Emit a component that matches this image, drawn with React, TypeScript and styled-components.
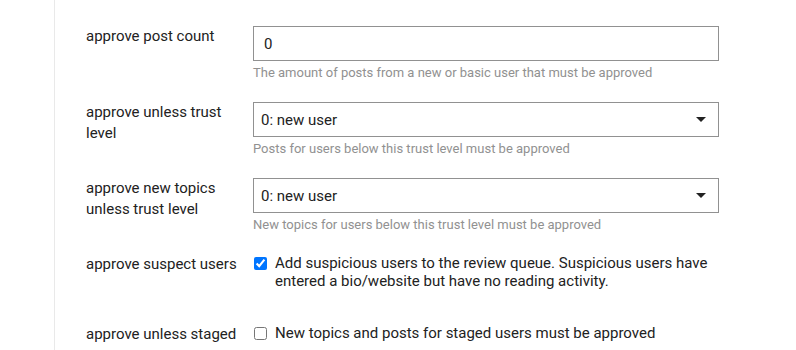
import React from 'react';
import styled, { createGlobalStyle } from 'styled-components';

const GlobalStyle = createGlobalStyle`
  body {
    margin: 0;
    background: #fff;
    font-family: Roboto, "Liberation Sans", sans-serif;
    color: #222;
  }
`;

const Page = styled.div`
  width: 796px;
  height: 350px;
  overflow: hidden;
  padding-left: 54px;
  box-sizing: border-box;
`;

const Panel = styled.div`
  border-left: 1px solid #e9e9e9;
  height: 100%;
  padding: 26px 0 0 31px;
  box-sizing: border-box;
`;

const SettingRow = styled.div<{ $gap: number }>`
  display: grid;
  grid-template-columns: 167px 466px;
  margin-bottom: ${({ $gap }) => $gap}px;
`;

const Label = styled.div`
  font-size: 15px;
  line-height: 21px;
  padding-right: 10px;
`;

const Value = styled.div`
  display: flex;
  flex-direction: column;
`;

const TextInput = styled.div`
  height: 35px;
  box-sizing: border-box;
  border: 1px solid #919191;
  padding: 0 10px;
  display: flex;
  align-items: center;
  font-size: 15px;
`;

const Select = styled.div`
  height: 35px;
  box-sizing: border-box;
  border: 1px solid #919191;
  padding: 0 12px 0 7px;
  display: flex;
  align-items: center;
  justify-content: space-between;
  font-size: 15px;
`;

const Caret = styled.span`
  width: 0;
  height: 0;
  border-left: 5px solid transparent;
  border-right: 5px solid transparent;
  border-top: 5px solid #222;
`;

const Description = styled.div`
  font-size: 13px;
  line-height: 18px;
  color: #919191;
  margin-top: 3px;
`;

const CheckLabel = styled.label`
  display: flex;
  align-items: flex-start;
  font-size: 15px;
  line-height: 18px;
`;

const Box = styled.input`
  width: 13px;
  height: 13px;
  margin: 3px 8px 0 1px;
  flex-shrink: 0;
  accent-color: #0075ff;
`;

const selects = [
  { label: 'approve unless trust level', value: '0: new user', desc: 'Posts for users below this trust level must be approved' },
  { label: 'approve new topics unless trust level', value: '0: new user', desc: 'New topics for users below this trust level must be approved' },
];

export default function App() {
  return (
    <>
      <GlobalStyle />
      <Page>
        <Panel>
          <SettingRow $gap={20}>
            <Label>approve post count</Label>
            <Value>
              <TextInput>0</TextInput>
              <Description>The amount of posts from a new or basic user that must be approved</Description>
            </Value>
          </SettingRow>
          {selects.map((s) => (
            <SettingRow key={s.label} $gap={20}>
              <Label>{s.label}</Label>
              <Value>
                <Select>
                  {s.value}
                  <Caret />
                </Select>
                <Description>{s.desc}</Description>
              </Value>
            </SettingRow>
          ))}
          <SettingRow $gap={34}>
            <Label>approve suspect users</Label>
            <CheckLabel>
              <Box type="checkbox" defaultChecked />
              Add suspicious users to the review queue. Suspicious users have entered a bio/website but have no reading activity.
            </CheckLabel>
          </SettingRow>
          <SettingRow $gap={0}>
            <Label>approve unless staged</Label>
            <CheckLabel>
              <Box type="checkbox" />
              New topics and posts for staged users must be approved
            </CheckLabel>
          </SettingRow>
        </Panel>
      </Page>
    </>
  );
}
